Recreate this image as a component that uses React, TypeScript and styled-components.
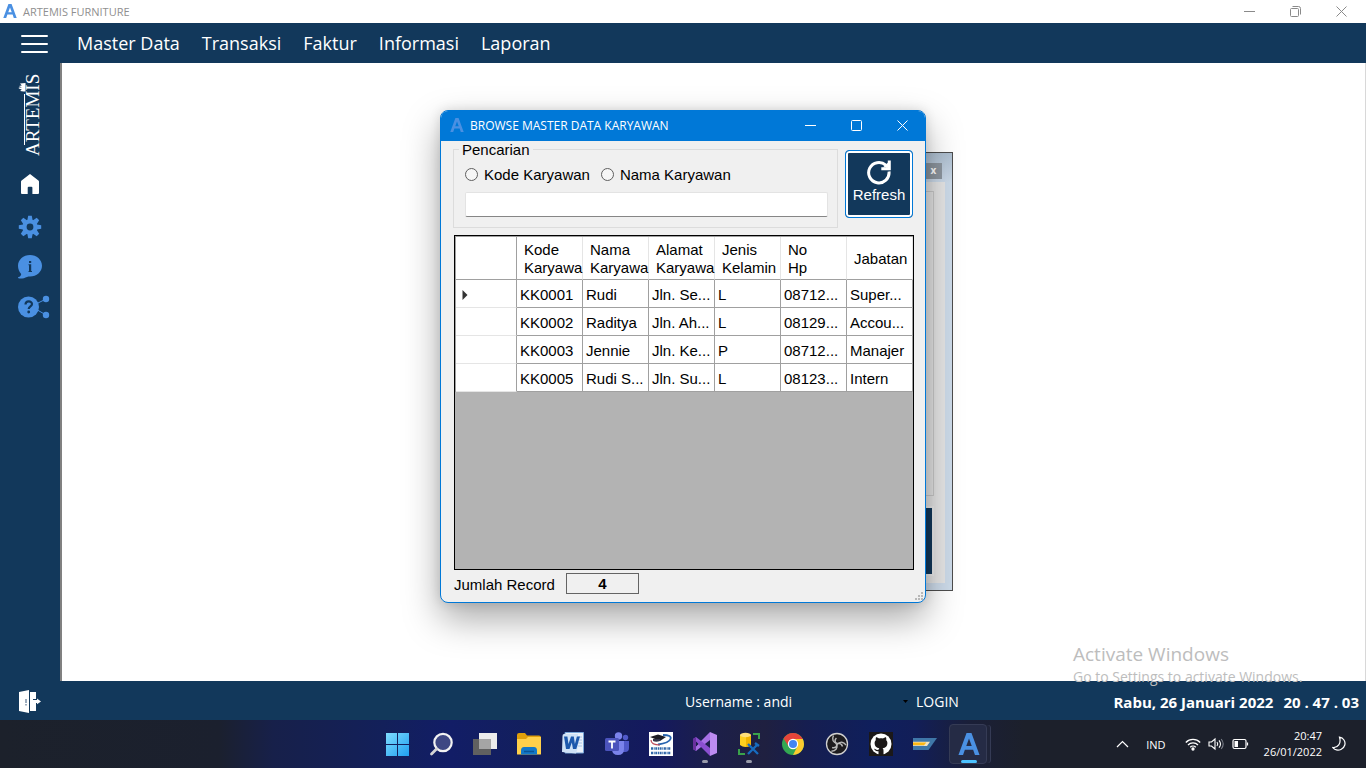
import React from 'react';
import styled, { createGlobalStyle } from 'styled-components';

const navy = '#12385b';
const blue = '#0078d7';
const accent = '#4a90e2';
const segoe = '"Open Sans", "Noto Sans", sans-serif';
const arial = '"Liberation Sans", Arial, sans-serif';

const GlobalStyle = createGlobalStyle`
  *, *::before, *::after { box-sizing: border-box; }
  body { margin: 0; font-family: ${segoe}; }
  button, input { font: inherit; color: inherit; }
`;

const Screen = styled.div`
  position: relative;
  display: flex;
  flex-direction: column;
  height: 100vh;
  overflow: hidden;
  background: #fff;
`;

const TitleBar = styled.header`
  display: flex;
  align-items: center;
  height: 23px;
  padding: 0 2px 1px 3px;
  gap: 6px;
  font-size: 11px;
  color: #8f8f8f;
`;

const WindowButtons = styled.div`
  display: flex;
  margin-left: auto;
  height: 100%;
`;

const WindowButton = styled.button`
  display: flex;
  align-items: center;
  justify-content: center;
  width: 46px;
  height: 100%;
  padding: 0;
  border: 0;
  background: none;
`;

const MenuBar = styled.nav`
  display: flex;
  align-items: center;
  height: 40px;
  padding-left: 20px;
  gap: 22px;
  background: ${navy};
  color: #fff;
  font-size: 18px;
`;

const PlainButton = styled.button`
  display: flex;
  align-items: center;
  padding: 0;
  border: 0;
  background: none;
`;

const HamburgerButton = styled(PlainButton)`
  margin-right: 7px;
`;

const MenuLink = styled.a`
  color: inherit;
  text-decoration: none;
  white-space: nowrap;
`;

const Main = styled.div`
  display: flex;
  flex: 1;
  min-height: 0;
`;

const Sidebar = styled.aside`
  display: flex;
  flex-direction: column;
  align-items: center;
  width: 60px;
  padding-top: 8px;
  background: ${navy};
`;

const SideButton = styled(PlainButton)`
  justify-content: center;
  width: 100%;
  height: 40px;
`;

const SideIcons = styled.div`
  display: flex;
  flex-direction: column;
  width: 100%;
  padding-top: 8px;
`;

const Workspace = styled.main`
  position: relative;
  flex: 1;
  border-left: 2px solid #808080;
  border-right: 1px solid #d8d8d8;
  background: #fff;
`;

const ChildWindow = styled.section`
  position: absolute;
  left: 438px;
  top: 89px;
  width: 453px;
  height: 439px;
  padding: 29px 7px 7px;
  border: 1px solid #4d4d4d;
  background: linear-gradient(#aebfd0, #cddbea 30px);
`;

const ChildClose = styled.button`
  position: absolute;
  right: 10px;
  top: 10px;
  width: 17px;
  height: 16px;
  padding: 0 0 2px;
  border: 0;
  background: #8d969f;
  color: #fff;
  font-size: 10px;
  font-weight: 700;
  line-height: 14px;
`;

const ChildBody = styled.div`
  display: flex;
  flex-direction: column;
  height: 100%;
  padding: 9px 11px 7px;
  gap: 10px;
  background: #e6e6e6;
`;

const ChildGroup = styled.div`
  flex: 1;
  border: 1px solid #cacaca;
`;

const ChildAction = styled.div`
  width: 70px;
  height: 70px;
  align-self: flex-end;
  border: 2px solid #ececec;
  background: ${navy};
`;

const Dialog = styled.section`
  position: absolute;
  left: 378px;
  top: 47px;
  width: 486px;
  height: 493px;
  display: flex;
  flex-direction: column;
  border: 1px solid ${blue};
  border-radius: 8px;
  overflow: hidden;
  background: #f0f0f0;
  box-shadow: 0 16px 36px rgba(0, 0, 0, 0.34), 0 0 12px rgba(0, 0, 0, 0.12);
  font-family: ${arial};
  font-size: 15px;
  color: #000;
`;

const DialogTitle = styled.header`
  display: flex;
  align-items: center;
  height: 30px;
  padding: 0 0 2px 9px;
  gap: 6px;
  background: ${blue};
  color: #fff;
  font-family: ${segoe};
  font-size: 12px;
`;

const DialogBody = styled.div`
  display: flex;
  flex: 1;
  flex-direction: column;
  min-height: 0;
  padding: 0 11px 7px 13px;
`;

const SearchRow = styled.div`
  display: flex;
  align-items: flex-end;
  justify-content: space-between;
  height: 87px;
  margin: 0 1px 0 -1px;
`;

const SearchGroup = styled.fieldset`
  width: 385px;
  height: 87px;
  margin: 0;
  padding: 7px 9px 0 11px;
  border: 1px solid #dcdcdc;
  min-width: 0;
`;

const Legend = styled.legend`
  margin-left: -6px;
  padding: 0 3px;
  line-height: 17px;
`;

const RadioRow = styled.div`
  display: flex;
  gap: 11px;
  height: 18px;
`;

const RadioLabel = styled.label`
  display: flex;
  align-items: center;
  gap: 6px;
`;

const Radio = styled.input`
  appearance: none;
  width: 13px;
  height: 13px;
  margin: 0;
  border: 1px solid #5f5f5f;
  border-radius: 50%;
  background: #f6f6f6;
`;

const SearchInput = styled.input`
  display: block;
  width: 100%;
  height: 25px;
  margin-top: 9px;
  padding: 0 4px;
  border: 1px solid #e3e3e3;
  border-bottom-color: #868686;
  border-radius: 2px;
  background: #fff;
`;

const RefreshButton = styled.button`
  display: flex;
  flex-direction: column;
  align-items: center;
  align-self: flex-start;
  width: 68px;
  height: 68px;
  margin-top: 9px;
  padding: 8px 0 0;
  gap: 1px;
  border: 1px solid ${blue};
  border-radius: 4px;
  background: ${navy};
  box-shadow: inset 0 0 0 2px #fff;
  color: #fff;
  line-height: 18px;
`;

const GridBox = styled.div`
  flex: 1;
  margin-top: 7px;
  min-height: 0;
  border: 1px solid #000;
  background: #b3b3b3;
`;

const Table = styled.table`
  width: 100%;
  table-layout: fixed;
  border-collapse: separate;
  border-spacing: 0;
  border: solid #a0a0a0;
  border-width: 1px 0 0 1px;
  background: #fff;
  text-align: left;
`;

const StubCol = styled.col`
  width: 61px;
`;

const HeadCell = styled.th<{ $stub?: boolean }>`
  height: 43px;
  padding: 1px 0 0 7px;
  border-right: 1px solid ${p => (p.$stub ? '#a0a0a0' : '#e5e5e5')};
  border-bottom: 1px solid #a0a0a0;
  font-weight: 400;
  line-height: 18px;
`;

const Cell = styled.td<{ $stub?: boolean }>`
  height: 28px;
  padding: 2px 0 0 ${p => (p.$stub ? 6 : 3)}px;
  border-right: 1px solid #a0a0a0;
  border-bottom: 1px solid ${p => (p.$stub ? '#e5e5e5' : '#a0a0a0')};
  line-height: 18px;
  white-space: nowrap;
`;

const CountRow = styled.label`
  display: flex;
  align-items: center;
  gap: 11px;
  height: 23px;
  margin-top: 2px;
`;

const CountText = styled.span`
  padding-top: 2px;
`;

const CountBox = styled.input`
  width: 73px;
  height: 21px;
  padding: 0;
  border: 1px solid #646464;
  background: #f0f0f0;
  font-weight: 700;
  text-align: center;
`;

const Grip = styled.svg`
  position: absolute;
  right: 1px;
  bottom: 1px;
`;

const StatusBar = styled.footer`
  display: grid;
  grid-template-columns: 667fr 231fr 443fr;
  align-items: center;
  height: 39px;
  padding: 2px 7px 0 18px;
  background: ${navy};
  color: #fff;
  font-size: 14px;
`;

const StatusUser = styled.div`
  display: flex;
  align-items: center;
  justify-content: space-between;
  padding-right: 8px;
  white-space: nowrap;
`;

const StatusClock = styled.div`
  display: flex;
  justify-content: flex-end;
  gap: 10px;
  font-size: 15px;
  font-weight: 700;
  white-space: nowrap;
`;

const StatusSplit = styled.div`
  display: grid;
  grid-template-columns: auto 1fr;
  align-items: center;
`;

const Watermark = styled.div`
  position: absolute;
  right: 58px;
  bottom: 81px;
  width: 235px;
  color: #bdbdbd;
  font-size: 14px;
  line-height: 20px;
  white-space: nowrap;
  pointer-events: none;
`;

const WatermarkTitle = styled.div`
  font-size: 19px;
  line-height: 26px;
`;

const Taskbar = styled.footer`
  display: grid;
  grid-template-columns: 1fr auto 1fr;
  align-items: center;
  height: 48px;
  background: linear-gradient(90deg, #1c212b 0%, #1b202e 16%, #17204a 20%, #13205a 28%, #121d66 33%, #132058 42%, #14195e 48%, #1c1f4a 52%, #1f2040 56%, #161e50 59%, #0f1f5c 64%, #121e58 67%, #1a1f38 71%, #1c202b 75%, #1c202b 100%);
  color: #fff;
`;

const Apps = styled.div`
  display: flex;
  grid-column: 2;
`;

const AppButton = styled.button<{ $state?: 'open' | 'active' }>`
  position: relative;
  display: flex;
  align-items: center;
  justify-content: center;
  width: 44px;
  height: 48px;
  padding: 0;
  border: 0;
  background: none;
  &::before {
    content: '';
    position: absolute;
    inset: 4px 4px 4px 2px;
    display: ${p => (p.$state === 'active' ? 'block' : 'none')};
    border: 1px solid #353b55;
    border-radius: 4px;
    background: #252b45;
    box-shadow: 4px 0 0 -1px #1f2439, 5px 0 0 -1px #353b55;
  }
  &::after {
    content: '';
    position: absolute;
    bottom: 5px;
    left: 0;
    right: 0;
    margin: 0 auto;
    width: ${p => (p.$state === 'active' ? 16 : 6)}px;
    height: 3px;
    display: ${p => (p.$state ? 'block' : 'none')};
    border-radius: 2px;
    background: ${p => (p.$state === 'active' ? '#4cc2ff' : '#9a9cab')};
  }
  svg { position: relative; }
`;

const Tray = styled.div`
  display: flex;
  align-items: center;
  justify-content: flex-end;
  padding-right: 20px;
  font-size: 11px;
`;

const TrayLanguage = styled.span`
  margin: 0 19px 0 17px;
`;

const TrayIcons = styled.div`
  display: flex;
  align-items: center;
  gap: 7px;
  margin-right: 15px;
`;

const TrayClock = styled.time`
  margin-right: 10px;
  line-height: 16px;
  text-align: right;
`;

const LogoA = ({ size }: { size: number }) => (
  <svg width={size} height={size} viewBox="0 0 24 24" aria-hidden="true">
    <path d="M9.300 0h5.400L23.500 24h-5l-2-5.800h-9L5.500 24h-5zM12 6L9 14.200h6z" fill={accent} fillRule="evenodd" />
  </svg>
);

const WindowControls = ({ color, restore }: { color: string; restore?: boolean }) => (
  <WindowButtons>
    <WindowButton aria-label="Minimize">
      <svg width="11" height="11" viewBox="0 0 11 11"><path d="M0 5.500h11" stroke={color} /></svg>
    </WindowButton>
    <WindowButton aria-label="Maximize">
      <svg width="11" height="11" viewBox="0 0 11 11" fill="none" stroke={color}>
        {restore ? (
          <><rect x="0.5" y="2.5" width="8" height="8" rx="1" /><path d="M2.500 .5h6a2 2 0 0 1 2 2v6" /></>
        ) : (
          <rect x="0.500" y="0.500" width="10" height="10" rx="1" />
        )}
      </svg>
    </WindowButton>
    <WindowButton aria-label="Close">
      <svg width="11" height="11" viewBox="0 0 11 11"><path d="M.5 .5l10 10M10.500 .5l-10 10" stroke={color} /></svg>
    </WindowButton>
  </WindowButtons>
);

const BrandLogo = () => (
  <svg width="24" height="88" viewBox="0 0 24 88" role="img" aria-label="Artemis">
    <text transform="translate(21 85) rotate(-90)" fontFamily="Liberation Serif, serif" fontSize="19" fill="#fff">ARTEMIS</text>
    <path d="M6.500 23v51" stroke="#fff" strokeWidth="1" />
    <path d="M7.500 12v8.500H5.500L2 20l1.800-1.600L.8 17.600v-1l3.200-.2L.8 15l3-.4L2 12.500z" fill="#fff" />
  </svg>
);

const HomeIcon = () => (
  <svg width="20" height="26" viewBox="0 0 20 26" aria-hidden="true">
    <path d="M10 0l8.400 6.400q.6.500.6 1.300V19q0 1-1 1h-5.600v-6.200q0-1-1-1H8.700q-1 0-1 1V20H2q-1 0-1-1V7.700q0-.8.600-1.300z" fill="#fff" />
  </svg>
);

const GearIcon = () => (
  <svg width="24" height="24" viewBox="-12 -12 24 24" aria-hidden="true">
    <g fill={accent}>
      {[0, 45, 90, 135].map(a => <path key={a} transform={`rotate(${a})`} d="M-1.800-11.200h3.600l.8 4.200v14l-.8 4.200h-3.600l-.8-4.200v-14z" />)}
      <circle r="7.600" />
    </g>
    <circle r="3.400" fill={navy} />
  </svg>
);

const InfoIcon = () => (
  <svg width="24" height="24" viewBox="0 0 24 24" aria-hidden="true">
    <path d="M12 0c6.600 0 12 4.700 12 10.800S18.600 21.500 12 21.500c-1 0-2 0-3 .4C6.500 23 3.500 24 .5 23.300c-.6-.2-.6-1 0-1.200 1.600-.6 2.600-1.800 2.700-3.200C1.200 17 0 14 0 10.800 0 4.700 5.400 0 12 0z" fill={accent} />
    <path d="M11 6h2.200v2H11zM10.500 9.300h2.700V16H14v1h-3.500v-1h.5v-5.700h-.5z" fill={navy} />
  </svg>
);

const HelpIcon = () => (
  <svg width="40" height="24" viewBox="-8 0 40 24" aria-hidden="true">
    <path d="M28 4L16 10M28 20L16 13" stroke={accent} strokeWidth="1" />
    <circle cx="10.500" cy="12" r="10.500" fill={accent} />
    <circle cx="28" cy="4" r="3.200" fill={accent} />
    <circle cx="28" cy="20" r="3.200" fill={accent} />
    <path d="M7.500 9.500c0-4 6.500-4 6.500-.5 0 2.400-3.300 2.300-3.300 5" fill="none" stroke={navy} strokeWidth="2.200" />
    <circle cx="10.700" cy="17" r="1.400" fill={navy} />
  </svg>
);

const ExitIcon = () => (
  <svg width="24" height="26" viewBox="0 0 24 26" aria-hidden="true">
    <path d="M1 3l10-2v23L1 22zM12 3h6v7h-3v4h3v8h-6z" fill="#fff" />
    <path d="M14.500 11h4.500V9.500l4 2.900-4 2.900V14h-4.500z" fill="#fff" />
    <path d="M8 10v4M8 15v1.500" stroke="#7c91a8" strokeWidth="1.500" />
  </svg>
);

const RefreshIcon = () => (
  <svg width="26" height="26" viewBox="0 0 26 26" fill="none" stroke="#fff" strokeWidth="3" aria-hidden="true">
    <path d="M23 12.500A10.200 10.200 0 1 1 19.800 6.200L22 8" />
    <path d="M23.300 1.500v8.300h-8" />
    <path d="M22 3.500v5h-5z" fill="#fff" stroke="none" />
  </svg>
);

const StartIcon = () => (
  <svg width="24" height="24" viewBox="0 0 24 24">
    <defs><linearGradient id="start" x1="0" y1="0" x2="1" y2="1"><stop stopColor="#7fdcff" /><stop offset="1" stopColor="#1fa0f0" /></linearGradient></defs>
    <path d="M1 1h11v11H1zM13 1h11v11H13zM1 13h11v11H1zM13 13h11v11H13z" fill="url(#start)" />
  </svg>
);

const SearchIcon = () => (
  <svg width="24" height="24" viewBox="0 0 24 24">
    <circle cx="14" cy="10.500" r="8.700" fill="#3e4783" stroke="#f2f2f2" strokeWidth="2.200" />
    <path d="M7.500 17L2.500 22" stroke="#d5d5d5" strokeWidth="2.800" strokeLinecap="round" />
  </svg>
);

const TaskViewIcon = () => (
  <svg width="24" height="24" viewBox="0 0 24 24">
    <path d="M6 1h18v16H6z" fill="#ececec" />
    <path d="M0 7h18v16H0z" fill="#606060" />
    <path d="M6 7h12v10H6z" fill="#a5a5a5" />
  </svg>
);

const FolderIcon = () => (
  <svg width="24" height="24" viewBox="0 0 24 24">
    <path d="M0 3q0-2 2-2h6l2 2.500h12q2 0 2 2V9H0z" fill="#e09f0a" />
    <path d="M0 7h9l2-2h13v17q0 .5-.5.500H.5Q0 22.500 0 22z" fill="#ffd04a" />
    <path d="M4 22.500v-4Q4 15 7 15h10q3 0 3 3.500v4z" fill="#1378c8" />
    <path d="M7 19.500h10" stroke="#0b5394" strokeWidth="1.500" />
  </svg>
);

const WordIcon = () => (
  <svg width="24" height="24" viewBox="0 0 24 24">
    <path d="M4 .5h18.500v20.500H4z" fill="#e9f1fa" stroke="#78a6d8" />
    <path d="M17 5h4M18 8h3M17 11h4M16 14h5" stroke="#a9c6e8" />
    <path d="M3 2q-1.500 0-1.500 2L1 20l14 1.500 2-7V2z" fill="#cfe2f6" />
    <path d="M3 4.500h3.400L7.500 12 10 4.500h2.800L13.900 12l2-7.500H19L15.300 17H12L10.800 10.500 8.500 17H5z" fill="#1c58ac" />
  </svg>
);

const TeamsIcon = () => (
  <svg width="24" height="24" viewBox="0 0 24 24">
    <circle cx="20.500" cy="5.500" r="2.700" fill="#5059c9" />
    <circle cx="13.500" cy="4" r="3.700" fill="#7b83eb" />
    <path d="M16 9h8v7q0 4-4 4h-4z" fill="#5059c9" />
    <path d="M7 9h12v8q0 6-6 6t-6-6z" fill="#7b83eb" />
    <rect y="6" width="14" height="13" rx="1.500" fill="#4b53bc" />
    <path d="M3.500 9.500h7M7 9.500v7" stroke="#fff" strokeWidth="1.800" />
  </svg>
);

const CampusIcon = () => (
  <svg width="24" height="24" viewBox="0 0 24 24">
    <path d="M0 0h24v24H0z" fill="#fff" />
    <path d="M1 5l8-2.500L17 5l-6 4z" fill="#1b1b24" />
    <path d="M4 7v2q3 1.500 7 0V7z" fill="#35354a" />
    <path d="M14 3q9 0 7.500 4T9 12.500" fill="none" stroke="#2764b0" strokeWidth="1.800" />
    <path d="M2 8q0 5 9 5" fill="none" stroke="#c04a57" strokeWidth="1.200" />
    <path d="M2 16.500h20M2 21h20" stroke="#2f66a8" strokeWidth="2.400" strokeDasharray="2 .7 1 .6" />
  </svg>
);

const VisualStudioIcon = () => (
  <svg width="24" height="24" viewBox="0 0 24 24">
    <path d="M17 0v8L3 19l-3-2z" fill="#a670e5" />
    <path d="M17 24v-8L3 5 0 7z" fill="#8a4fd0" />
    <path d="M0 7l3-2v14l-3-2z" fill="#68309f" />
    <path d="M17 0l7 3v18l-7 3z" fill="#bd8cf2" />
    <path d="M3 9.500v5L5.500 12z" fill="#1b1f4e" />
  </svg>
);

const DatabaseIcon = () => (
  <svg width="24" height="24" viewBox="0 0 24 24">
    <path d="M3 3v10q5 4 11 0V3z" fill="#ffcf1f" />
    <path d="M9 3h5v10q-2 2-5 2z" fill="#f3b400" />
    <ellipse cx="8.500" cy="3" rx="5.500" ry="2.200" fill="#ffdf7a" />
    <path d="M16 2h6v5M2 17v5h6" fill="none" stroke="#3aa24b" strokeWidth="2" />
    <path d="M11 12l10 10M21 12L11 22M18 11l4 3" stroke="#176cc0" strokeWidth="2.300" />
  </svg>
);

const ChromeIcon = () => (
  <svg width="24" height="24" viewBox="0 0 24 24">
    <circle cx="12" cy="12" r="11" fill="#33a852" />
    <path d="M2.500 6.500A11 11 0 0 1 21.500 6.500L22 7H12L7.700 14.500z" fill="#e5443a" />
    <path d="M12 7h9.800A11 11 0 0 1 12 23l4.300-8.500z" fill="#fccb2f" />
    <circle cx="12" cy="12" r="5.200" fill="#fff" />
    <circle cx="12" cy="12" r="4" fill="#4285f4" />
  </svg>
);

const ObsIcon = () => (
  <svg width="24" height="24" viewBox="-12 -12 24 24">
    <circle r="10.500" fill="#1d1b1e" stroke="#d0d0d0" strokeWidth="1.300" />
    {[0, 120, 240].map(a => (
      <path key={a} transform={`rotate(${a})`} d="M.5-.5C-4-1-5.500-4.500-3.500-8.500M.5-.5C3.500-1 5 .5 5.500 2.500" fill="none" stroke="#b9b9b9" strokeWidth="1.400" />
    ))}
  </svg>
);

const GithubIcon = () => (
  <svg width="24" height="24" viewBox="0 0 24 24">
    <path d="M0 0h24v24H0z" fill="#1b1818" />
    <circle cx="12" cy="12" r="10.500" fill="#fff" />
    <path d="M9.500 23v-3.800c-3 .6-3.700-1.400-4.600-2.400 1.800-.2 1.800 1.600 4.700 1 .1-.7.400-1.200.8-1.500-3-.4-4.800-1.800-4.800-5 0-1.300.4-2.200 1.200-3-.2-.9-.2-2 .2-3 1.200 0 2.200.6 3 1.200 1.400-.3 2.700-.3 4 0 .9-.6 2-1.200 3-1.200.4 1 .4 2.100.2 3 .8.800 1.200 1.700 1.200 3 0 3.200-1.800 4.600-4.800 5 .6.500.9 1.200.9 2.400V23z" fill="#1b1818" />
  </svg>
);

const EditorIcon = () => (
  <svg width="24" height="24" viewBox="0 0 24 24">
    <path d="M0 6h24l-8.500 12H0z" fill="#3f77a8" />
    <path d="M0 10h14l-2.500 3.500H0z" fill="#fdb813" />
    <path d="M0 9.700h17l-3 4.300H0v-.8h11L13.300 10.500H0z" fill="#f3e3bd" />
  </svg>
);

const GridArrow = () => (
  <svg width="6" height="10" viewBox="0 0 6 10" aria-label="Current row"><path d="M.5 0L5.500 5l-5 5z" fill="#333" /></svg>
);

const menus = ['Master Data', 'Transaksi', 'Faktur', 'Informasi', 'Laporan'];

const sideItems = [
  { label: 'Home', icon: <HomeIcon /> },
  { label: 'Settings', icon: <GearIcon /> },
  { label: 'Info', icon: <InfoIcon /> },
  { label: 'Help', icon: <HelpIcon /> },
];

const columns = [['Kode', 'Karyawa'], ['Nama', 'Karyawa'], ['Alamat', 'Karyawa'], ['Jenis', 'Kelamin'], ['No', 'Hp'], ['Jabatan']];

const employees = [
  ['KK0001', 'Rudi', 'Jln. Se...', 'L', '08712...', 'Super...'],
  ['KK0002', 'Raditya', 'Jln. Ah...', 'L', '08129...', 'Accou...'],
  ['KK0003', 'Jennie', 'Jln. Ke...', 'P', '08712...', 'Manajer'],
  ['KK0005', 'Rudi S...', 'Jln. Su...', 'L', '08123...', 'Intern'],
];

const apps: { name: string; icon: React.ReactNode; state?: 'open' | 'active' }[] = [
  { name: 'Start', icon: <StartIcon /> },
  { name: 'Search', icon: <SearchIcon /> },
  { name: 'Task view', icon: <TaskViewIcon /> },
  { name: 'File Explorer', icon: <FolderIcon /> },
  { name: 'Word', icon: <WordIcon /> },
  { name: 'Teams', icon: <TeamsIcon /> },
  { name: 'Campus', icon: <CampusIcon /> },
  { name: 'Visual Studio', icon: <VisualStudioIcon />, state: 'open' },
  { name: 'SQL Server', icon: <DatabaseIcon />, state: 'open' },
  { name: 'Chrome', icon: <ChromeIcon /> },
  { name: 'OBS', icon: <ObsIcon /> },
  { name: 'GitHub', icon: <GithubIcon /> },
  { name: 'Editor', icon: <EditorIcon /> },
  { name: 'Artemis Furniture', icon: <LogoA size={22} />, state: 'active' },
];

const BrowseDialog = () => (
  <Dialog role="dialog" aria-labelledby="dialog-title">
    <DialogTitle>
      <LogoA size={14} />
      <span id="dialog-title">BROWSE MASTER DATA KARYAWAN</span>
      <WindowControls color="#fff" />
    </DialogTitle>
    <DialogBody>
      <SearchRow>
        <SearchGroup>
          <Legend>Pencarian</Legend>
          <RadioRow>
            <RadioLabel><Radio type="radio" name="field" />Kode Karyawan</RadioLabel>
            <RadioLabel><Radio type="radio" name="field" />Nama Karyawan</RadioLabel>
          </RadioRow>
          <SearchInput type="text" aria-label="Pencarian" />
        </SearchGroup>
        <RefreshButton><RefreshIcon />Refresh</RefreshButton>
      </SearchRow>
      <GridBox>
        <Table>
          <colgroup>
            <StubCol />
            {columns.map((_, i) => <col key={i} />)}
          </colgroup>
          <thead>
            <tr>
              <HeadCell $stub />
              {columns.map(lines => (
                <HeadCell key={lines.join(' ')} scope="col">
                  {lines.map(line => <div key={line}>{line}</div>)}
                </HeadCell>
              ))}
            </tr>
          </thead>
          <tbody>
            {employees.map((row, r) => (
              <tr key={row[0]}>
                <Cell $stub>{r === 0 && <GridArrow />}</Cell>
                {row.map((value, c) => <Cell key={c}>{value}</Cell>)}
              </tr>
            ))}
          </tbody>
        </Table>
      </GridBox>
      <CountRow>
        <CountText>Jumlah Record</CountText>
        <CountBox type="text" readOnly value={employees.length} />
      </CountRow>
    </DialogBody>
    <Grip width="9" height="9" viewBox="0 0 9 9" aria-hidden="true">
      <path d="M6 0h2v2H6zM6 3h2v2H6zM3 3h2v2H3zM6 6h2v2H6zM3 6h2v2H3zM0 6h2v2H0z" fill="#b8b8b8" />
    </Grip>
  </Dialog>
);

export default function App() {
  return (
    <Screen>
      <GlobalStyle />
      <TitleBar>
        <LogoA size={14} />
        <span>ARTEMIS FURNITURE</span>
        <WindowControls color="#8a8a8a" restore />
      </TitleBar>
      <MenuBar>
        <HamburgerButton aria-label="Menu">
          <svg width="28" height="20" viewBox="0 0 28 20"><path d="M2 3h25M2 11h25M2 19h25" stroke="#fff" strokeWidth="2" strokeLinecap="round" /></svg>
        </HamburgerButton>
        {menus.map(name => <MenuLink key={name} href="#">{name}</MenuLink>)}
      </MenuBar>
      <Main>
        <Sidebar>
          <BrandLogo />
          <SideIcons>
            {sideItems.map(item => <SideButton key={item.label} aria-label={item.label}>{item.icon}</SideButton>)}
          </SideIcons>
        </Sidebar>
        <Workspace>
          <ChildWindow>
            <ChildClose aria-label="Close window">x</ChildClose>
            <ChildBody>
              <ChildGroup />
              <ChildAction />
            </ChildBody>
          </ChildWindow>
          <BrowseDialog />
        </Workspace>
      </Main>
      <StatusBar>
        <PlainButton aria-label="Log out"><ExitIcon /></PlainButton>
        <StatusUser>
          Username : andi
          <svg width="5" height="3" viewBox="0 0 5 3" aria-hidden="true"><path d="M0 0h5L2.500 3z" fill="#000" /></svg>
        </StatusUser>
        <StatusSplit>
          <span>LOGIN</span>
          <StatusClock><span>Rabu, 26 Januari 2022</span><span>20 . 47 . 03</span></StatusClock>
        </StatusSplit>
      </StatusBar>
      <Watermark>
        <WatermarkTitle>Activate Windows</WatermarkTitle>
        Go to Settings to activate Windows.
      </Watermark>
      <Taskbar>
        <Apps>
          {apps.map(app => <AppButton key={app.name} aria-label={app.name} $state={app.state}>{app.icon}</AppButton>)}
        </Apps>
        <Tray>
          <svg width="13" height="8" viewBox="0 0 13 8" fill="none" stroke="#fff" strokeWidth="1.200"><path d="M1 7l5.500-5.500L12 7" /></svg>
          <TrayLanguage>IND</TrayLanguage>
          <TrayIcons>
            <svg width="16" height="14" viewBox="0 0 16 14" fill="none" stroke="#fff" strokeWidth="1.300">
              <path d="M.8 5.500a10 10 0 0 1 14.400 0M3 8a7 7 0 0 1 10 0M5.200 10.300a4 4 0 0 1 5.600 0" /><circle cx="8" cy="12" r="1" fill="#fff" />
            </svg>
            <svg width="17" height="14" viewBox="0 0 17 14" fill="none" stroke="#fff" strokeWidth="1.100">
              <path d="M1 5h2.500L7 2v10L3.500 9H1zM9 5q1.500 2 0 4M11 3.300q3 3.700 0 7.400" /><path d="M13.200 2q4 5 0 10" stroke="#7a7e88" />
            </svg>
            <svg width="17" height="12" viewBox="0 0 17 12" fill="none" stroke="#fff" strokeWidth="1.200">
              <rect x="1" y="1.500" width="13" height="9" rx="1.500" /><path d="M15.500 4.500v3" /><path d="M2.500 3h3.500v6H2.500z" fill="#fff" stroke="none" />
            </svg>
          </TrayIcons>
          <TrayClock>20:47<br />26/01/2022</TrayClock>
          <svg width="14" height="16" viewBox="0 0 14 16" fill="none" stroke="#fff" strokeWidth="1.200">
            <path d="M7.500 1.200c4 .6 6.200 4.200 5.300 7.800-1 4-6 6.500-10 4.300-.8-.5-1.500-1-2-1.800 5 .5 8.700-4 6.700-10.300z" />
          </svg>
        </Tray>
      </Taskbar>
    </Screen>
  );
}
